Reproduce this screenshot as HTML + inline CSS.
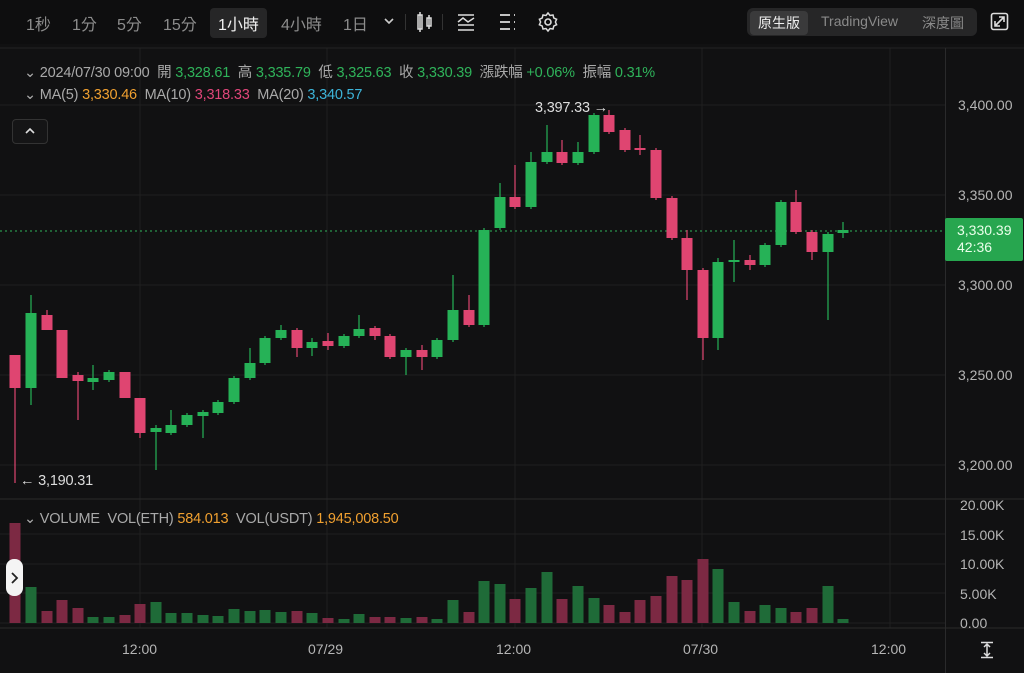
<!DOCTYPE html>
<html><head><meta charset="utf-8"><style>
*{margin:0;padding:0;box-sizing:border-box}
body{width:1024px;height:673px;background:#111112;overflow:hidden;font-family:"Liberation Sans","Noto Sans CJK TC",sans-serif;color:#8a8a8a;position:relative}
.top{position:absolute;left:0;top:0;width:1024px;height:44px;background:#0e0e0f}
.t{position:absolute;top:11px;font-size:16px;color:#8c8c8c}
.sel{background:#262627;color:#f0f0f0;border-radius:4px;padding:3px 8px;top:8px}
.seg{position:absolute;left:747px;top:8px;width:230px;height:28px;background:#262627;border-radius:6px}
.seg span{position:absolute;top:5px;font-size:14px;color:#8a8a8a}
.seg .on{left:3px;top:3px;background:#3a3a3b;color:#eee;padding:2px 8px;border-radius:4px}
.lg{position:absolute;font-size:14.5px;color:#a9a9a9;white-space:nowrap;letter-spacing:-0.2px}
.g{color:#2fb35a}.o{color:#f0a030}.p{color:#e0467a}.b{color:#3db4d8}
.ax{position:absolute;font-size:14px;color:#b5b5b5}
</style></head><body>
<svg id="s" width="1024" height="673" style="position:absolute;left:0;top:0"></svg>
<div class="top">
<span class="t" style="left:26px">1秒</span>
<span class="t" style="left:72px">1分</span>
<span class="t" style="left:117px">5分</span>
<span class="t" style="left:163px">15分</span>
<span class="t sel" style="left:210px">1小時</span>
<span class="t" style="left:281px">4小時</span>
<span class="t" style="left:343px">1日</span>
<svg style="position:absolute;left:382px;top:16px" width="14" height="10"><path d="M3 3l4 4 4-4" stroke="#ccc" stroke-width="1.6" fill="none"/></svg>
<svg style="position:absolute;left:405px;top:10px" width="160" height="24">
<line x1="0.5" y1="4" x2="0.5" y2="20" stroke="#333"/>
<rect x="13" y="5" width="4" height="14" fill="none" stroke="#ddd" stroke-width="1.5"/><line x1="15" y1="2" x2="15" y2="22" stroke="#ddd" stroke-width="1.5"/>
<rect x="22" y="8" width="4" height="8" fill="none" stroke="#ddd" stroke-width="1.5"/><line x1="24" y1="5" x2="24" y2="19" stroke="#ddd" stroke-width="1.5"/>
<line x1="37.5" y1="4" x2="37.5" y2="20" stroke="#333"/>
<path d="M53 5h16M53 12l5-4 5 4 6-4M53 15h16M53 20h16" stroke="#ddd" stroke-width="1.5" fill="none"/>
<path d="M95 5h10M95 12h10M95 19h10M109 5h1M109 12h1M109 19h1" stroke="#ddd" stroke-width="1.8" fill="none"/>
<circle cx="143" cy="12" r="3" fill="none" stroke="#ddd" stroke-width="1.6"/>
<path d="M143 3l2 2.5 3-.5 .8 3 2.8 1.3-1.2 2.7 1.2 2.7-2.8 1.3-.8 3-3-.5-2 2.5-2-2.5-3 .5-.8-3-2.8-1.3 1.2-2.7-1.2-2.7 2.8-1.3.8-3 3 .5z" fill="none" stroke="#ddd" stroke-width="1.5"/>
</svg>
<div class="seg"><span class="on">原生版</span><span style="left:74px">TradingView</span><span style="left:175px">深度圖</span></div>
<svg style="position:absolute;left:990px;top:12px" width="20" height="20"><rect x="1.5" y="1.5" width="16" height="16" rx="2" fill="none" stroke="#ddd" stroke-width="1.6"/><path d="M5 14l9-9M9 5h5v5M5 9v5h5" stroke="#ddd" stroke-width="1.6" fill="none"/></svg>
</div>
<div class="lg" style="left:24px;top:61px">⌄ 2024/07/30 09:00 &nbsp;開 <span class="g">3,328.61</span> &nbsp;高 <span class="g">3,335.79</span> &nbsp;低 <span class="g">3,325.63</span> &nbsp;收 <span class="g">3,330.39</span> &nbsp;漲跌幅 <span class="g">+0.06%</span> &nbsp;振幅 <span class="g">0.31%</span></div>
<div class="lg" style="left:24px;top:87px">⌄ MA(5) <span class="o">3,330.46</span> &nbsp;MA(10) <span class="p">3,318.33</span> &nbsp;MA(20) <span class="b">3,340.57</span></div>
<div style="position:absolute;left:12px;top:119px;width:36px;height:25px;border:1px solid #333;border-radius:4px;background:#151516"></div>
<svg style="position:absolute;left:24px;top:126px" width="12" height="10"><path d="M2 7l4-4 4 4" stroke="#ddd" stroke-width="1.6" fill="none"/></svg>
<div class="lg" style="left:535px;top:100px;color:#ddd">3,397.33 →</div>
<div class="lg" style="left:20px;top:473px;color:#ddd">← 3,190.31</div>
<div class="ax" style="left:958px;top:97px">3,400.00</div>
<div class="ax" style="left:958px;top:187px">3,350.00</div>
<div class="ax" style="left:958px;top:277px">3,300.00</div>
<div class="ax" style="left:958px;top:367px">3,250.00</div>
<div class="ax" style="left:958px;top:457px">3,200.00</div>
<div style="position:absolute;left:945px;top:218px;width:78px;height:43px;background:#27a64f;border-radius:2px;color:#eaffea;font-size:14px;padding:4px 0 0 12px;line-height:17px">3,330.39<br>42:36</div>
<div class="lg" style="left:24px;top:511px">⌄ VOLUME &nbsp;VOL(ETH) <span class="o">584.013</span> &nbsp;VOL(USDT) <span class="o">1,945,008.50</span></div>
<div class="ax" style="left:960px;top:497px">20.00K</div>
<div class="ax" style="left:960px;top:527px">15.00K</div>
<div class="ax" style="left:960px;top:556px">10.00K</div>
<div class="ax" style="left:960px;top:586px">5.00K</div>
<div class="ax" style="left:960px;top:615px">0.00</div>
<div class="ax" style="left:122px;top:641px">12:00</div>
<div class="ax" style="left:308px;top:641px">07/29</div>
<div class="ax" style="left:496px;top:641px">12:00</div>
<div class="ax" style="left:683px;top:641px">07/30</div>
<div class="ax" style="left:871px;top:641px">12:00</div>
<svg style="position:absolute;left:979px;top:641px" width="16" height="18"><path d="M2 1.5h12M2 16.5h12M8 3v12M5 6l3-3 3 3M5 12l3 3 3-3" stroke="#ddd" stroke-width="1.5" fill="none"/></svg>
<div style="position:absolute;left:6px;top:559px;width:17px;height:37px;background:#f4f4f4;border-radius:8px"></div>
<svg style="position:absolute;left:9px;top:571px" width="10" height="14"><path d="M3 2l5 5-5 5" stroke="#222" stroke-width="1.8" fill="none"/></svg>
<script>
var s=document.getElementById('s'),h='';
[105,195,285,375,465].forEach(y=>h+=`<line x1="0" y1="${y}" x2="945" y2="${y}" stroke="#1f1f20"/>`);
[534,564,593,623].forEach(y=>h+=`<line x1="0" y1="${y}" x2="945" y2="${y}" stroke="#1f1f20"/>`);
[140,327,515,702,890].forEach(x=>h+=`<line x1="${x}" y1="48" x2="${x}" y2="628" stroke="#1f1f20"/>`);
h+=`<line x1="0" y1="48" x2="1024" y2="48" stroke="#232324"/><line x1="0" y1="499" x2="1024" y2="499" stroke="#2a2a2b"/><line x1="0" y1="628" x2="1024" y2="628" stroke="#2a2a2b"/><line x1="945.5" y1="48" x2="945.5" y2="673" stroke="#2a2a2b"/>`;
h+=`<line x1="0" y1="231" x2="945" y2="231" stroke="#2fb35a" stroke-dasharray="2 3"/>`;
var G='#26b257',R='#df4571';
var c=[[15,355,388,355,483,0],[31,313,388,295,405,1],[47,315,330,310,330,0],[62,330,378,330,378,0],[78,375,381,372,420,0],[93,378,382,365,390,1],[109,372,380,370,382,1],[125,372,398,372,398,0],[140,398,433,398,438,0],[156,428,432,425,470,1],[171,425,433,410,435,1],[187,415,425,413,427,1],[203,412,416,410,438,1],[218,402,413,400,415,1],[234,378,402,376,404,1],[250,363,378,348,380,1],[265,338,363,336,365,1],[281,330,338,325,340,1],[297,330,348,328,357,0],[312,342,348,338,356,1],[328,341,346,333,350,0],[344,336,346,334,348,1],[359,329,336,315,338,1],[375,328,336,326,340,0],[390,336,357,334,359,0],[406,350,357,348,375,1],[422,350,357,345,370,0],[437,340,357,338,359,1],[453,310,340,275,342,1],[469,310,325,295,327,0],[484,230,325,228,327,1],[500,197,228,183,230,1],[515,197,207,165,209,0],[531,162,207,152,209,1],[547,152,162,125,164,1],[562,152,163,140,165,0],[578,152,163,142,165,1],[594,115,152,113,154,1],[609,115,132,110,134,0],[625,130,150,128,152,0],[640,148,150,135,155,0],[656,150,198,148,200,0],[672,198,238,196,240,0],[687,238,270,230,300,0],[703,270,338,268,360,0],[718,262,338,258,350,1],[734,260,262,240,282,1],[750,260,265,255,270,0],[765,245,265,243,267,1],[781,202,245,200,247,1],[796,202,232,190,234,0],[812,232,252,230,260,0],[828,234,252,232,320,1],[843,230,233,222,238,1]];
var v=[523,587,611,600,608,617,617,615,604,602,613,613,615,616,609,611,610,612,611,613,618,619,614,617,617,618,617,619,600,612,581,584,599,588,572,599,586,598,605,612,600,596,576,580,559,569,602,611,605,608,612,608,586,619];
c.forEach((d,i)=>{var col=d[5]?G:R;h+=`<line x1="${d[0]}" y1="${d[3]}" x2="${d[0]}" y2="${d[4]}" stroke="${col}" stroke-width="1.2"/><rect x="${d[0]-5.5}" y="${d[1]}" width="11" height="${Math.max(1.5,d[2]-d[1])}" fill="${col}"/>`;
var vc=d[5]?'#1f6b38':'#7c2943';h+=`<rect x="${d[0]-5.5}" y="${v[i]}" width="11" height="${623-v[i]}" fill="${vc}"/>`;});
s.innerHTML=h;
</script>
</body></html>
